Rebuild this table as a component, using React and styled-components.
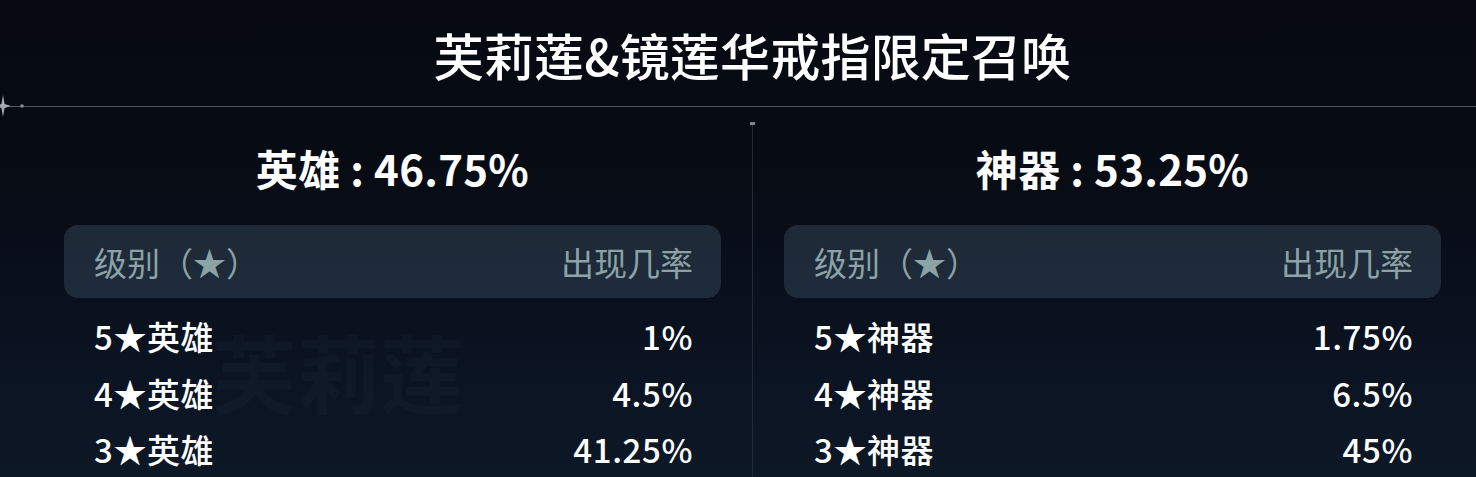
import React from 'react'
import styled, { createGlobalStyle } from 'styled-components'

const GlobalStyle = createGlobalStyle`
  html, body {
    margin: 0;
    padding: 0;
    background: #070a12;
  }
  * { box-sizing: border-box; }
`;

const pools = [
  {
    name: '英雄',
    rate: '46.75%',
    rows: [
      { label: '5★英雄', value: '1%' },
      { label: '4★英雄', value: '4.5%' },
      { label: '3★英雄', value: '41.25%' },
    ],
  },
  {
    name: '神器',
    rate: '53.25%',
    rows: [
      { label: '5★神器', value: '1.75%' },
      { label: '4★神器', value: '6.5%' },
      { label: '3★神器', value: '45%' },
    ],
  },
];

function Sparkle() {
  return (
    <SparkleIcon width="30" height="22" viewBox="0 0 30 22">
      <path d="M3 0 L4.6 9 L11 11 L4.6 13 L3 22 L1.4 13 L-5 11 L1.4 9 Z" fill="#a4aab2" />
      <circle cx="22" cy="11" r="1.8" fill="#8a9099" />
    </SparkleIcon>
  );
}

function PoolColumn({ pool, watermark }) {
  return (
    <Column>
      {watermark && <Watermark>{watermark}</Watermark>}
      <Heading>{pool.name} : {pool.rate}</Heading>
      <HeaderBar>
        <span>级别（★）</span>
        <span>出现几率</span>
      </HeaderBar>
      <Rows>
        {pool.rows.map((r) => (
          <Row key={r.label}>
            <span>{r.label}</span>
            <span>{r.value}</span>
          </Row>
        ))}
      </Rows>
    </Column>
  );
}

export default function App() {
  return (
    <>
      <GlobalStyle />
      <Page>
        <TitleWrap>
          <Title>芙莉莲&amp;镜莲华戒指限定召唤</Title>
        </TitleWrap>
        <Rule>
          <Sparkle />
        </Rule>
        <Columns>
          <PoolColumn pool={pools[0]} watermark="芙莉莲" />
          <Divider />
          <PoolColumn pool={pools[1]} />
        </Columns>
      </Page>
    </>
  );
}

const Page = styled.div`
  position: relative;
  width: 1476px;
  height: 477px;
  overflow: hidden;
  background: linear-gradient(180deg, #070a12 0%, #070b14 35%, #0a1220 70%, #0d1827 100%);
  font-family: "Noto Sans CJK SC", "Noto Sans", sans-serif;
  color: #ffffff;
`;

const TitleWrap = styled.div`
  padding: 24px 35px 0 64px;
`;

const Title = styled.h1`
  margin: 0;
  text-align: center;
  font-size: 50px;
  line-height: 60px;
  font-weight: 500;
  letter-spacing: 0.2px;
`;

const Rule = styled.div`
  position: relative;
  margin-top: 22px;
  height: 1px;
  background: #50555e;
`;

const SparkleIcon = styled.svg`
  position: absolute;
  left: 0;
  top: -11px;
`;

const Columns = styled.div`
  display: grid;
  grid-template-columns: 657px 1px 657px;
  column-gap: 31px;
  padding-left: 64px;
  margin-top: 17px;
  height: 353px;
`;

const Divider = styled.div`
  position: relative;
  background: #222a36;
  &::before {
    content: '';
    position: absolute;
    left: -2px;
    top: -2px;
    width: 5px;
    height: 3px;
    background: #7a8290;
  }
`;

const Column = styled.div`
  position: relative;
  padding-top: 19px;
  display: flex;
  flex-direction: column;
`;

const Watermark = styled.div`
  position: absolute;
  left: 148px;
  top: 205px;
  font-size: 84px;
  font-weight: 700;
  line-height: 1;
  color: rgba(140, 170, 200, 0.035);
  pointer-events: none;
`;

const Heading = styled.h2`
  position: relative;
  margin: 0;
  text-align: center;
  font-size: 42px;
  line-height: 50px;
  font-weight: 700;
  letter-spacing: 0.3px;
`;

const HeaderBar = styled.div`
  position: relative;
  margin-top: 32px;
  height: 73px;
  border-radius: 14px;
  background: rgba(44, 60, 76, 0.62);
  display: flex;
  align-items: center;
  justify-content: space-between;
  padding: 0 28px 0 30px;
  font-size: 33px;
  font-weight: 400;
  color: #8ba2a6;
`;

const Rows = styled.div`
  position: relative;
  margin-top: 10px;
  display: flex;
  flex-direction: column;
`;

const Row = styled.div`
  height: 56.5px;
  display: flex;
  align-items: center;
  justify-content: space-between;
  padding: 0 28px 0 30px;
  font-size: 33px;
  font-weight: 500;
  letter-spacing: 0.6px;
  color: #ffffff;
`;
